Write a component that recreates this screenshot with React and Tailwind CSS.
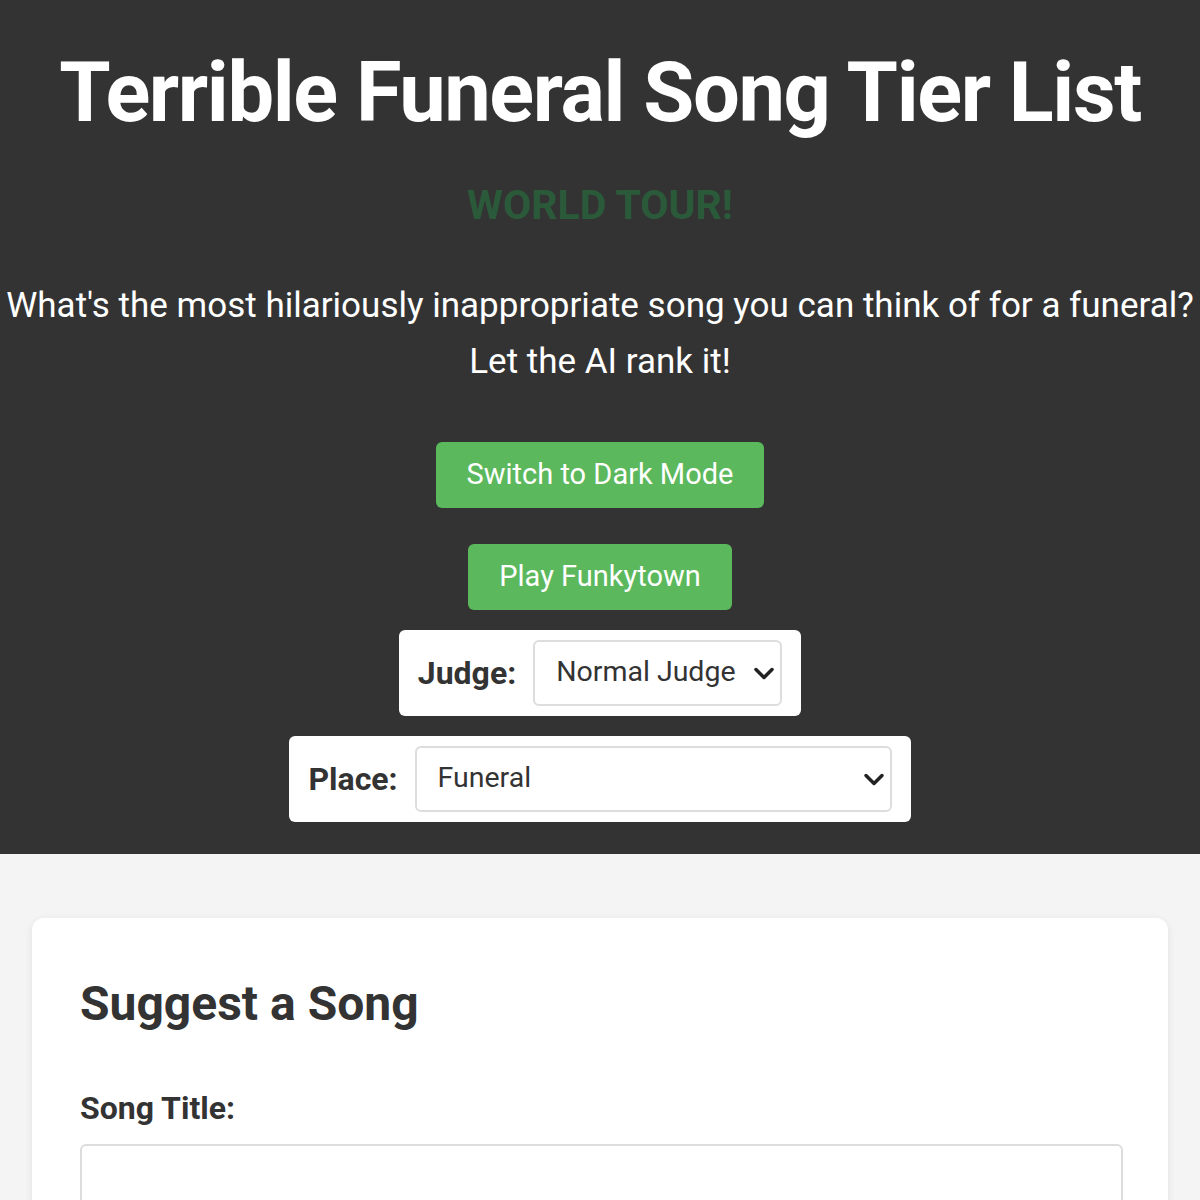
import React, { useState } from 'react';

const Chevron = () => (
  <svg width="24" height="24" viewBox="0 0 24 24" fill="none" stroke="#222" strokeWidth="3.5" strokeLinecap="round" strokeLinejoin="round">
    <path d="M4 8.5l8 8 8-8" />
  </svg>
);

const SelectBox = ({ label, value, options, onChange, width }) => (
  <div className="flex items-center gap-[17px] bg-white rounded-md px-[19px] py-[10px]">
    <label className="text-[32px] font-bold text-[#333]">{label}</label>
    <div className={`relative ${width}`}>
      <select
        value={value}
        onChange={(e) => onChange(e.target.value)}
        className="w-full h-[66px] appearance-none border-2 border-[#ddd] rounded-md bg-white pl-[21px] pr-[36px] text-[28.5px] text-[#333]"
      >
        {options.map((o) => (
          <option key={o}>{o}</option>
        ))}
      </select>
      <span className="absolute right-[6px] top-1/2 -translate-y-1/2 pointer-events-none flex">
        <Chevron />
      </span>
    </div>
  </div>
);

export default function App() {
  const [judge, setJudge] = useState('Normal Judge');
  const [place, setPlace] = useState('Funeral');
  const [title, setTitle] = useState('');

  return (
    <div className="min-h-screen bg-[#f4f4f4] font-['Roboto',sans-serif] text-[#333]">
      <header className="bg-[#333] text-white flex flex-col items-center pt-[43px] pb-[32px]">
        <h1 className="text-[83px] font-bold leading-[1.2] tracking-[-1.4px]">Terrible Funeral Song Tier List</h1>
        <div className="mt-[42px] text-[41px] font-bold text-[#2a5a3a] leading-none">WORLD TOUR!</div>
        <p className="mt-[52px] text-[35px] leading-[56px] text-center whitespace-nowrap">
          What's the most hilariously inappropriate song you can think of for a funeral?
          <br />
          Let the AI rank it!
        </p>
        <button className="mt-[52px] w-[328px] h-[66px] bg-[#5cb85c] rounded-md text-[29px] text-white">
          Switch to Dark Mode
        </button>
        <button className="mt-[36px] w-[264px] h-[66px] bg-[#5cb85c] rounded-md text-[29px] text-white">
          Play Funkytown
        </button>
        <div className="mt-[20px]">
          <SelectBox label="Judge:" value={judge} onChange={setJudge} width="w-[249px]" options={['Normal Judge', 'Harsh Judge', 'Nice Judge']} />
        </div>
        <div className="mt-[20px]">
          <SelectBox label="Place:" value={place} onChange={setPlace} width="w-[477px]" options={['Funeral', 'Wedding', 'Birthday']} />
        </div>
      </header>

      <main className="px-[32px] pt-[64px]">
        <section className="bg-white rounded-xl shadow-[0_2px_8px_rgba(0,0,0,0.08)] pl-[48px] pr-[45px] pt-[56px] pb-[40px]">
          <h2 className="text-[48px] font-bold leading-tight">Suggest a Song</h2>
          <label className="block mt-[50px] text-[32px] font-bold">Song Title:</label>
          <input
            value={title}
            onChange={(e) => setTitle(e.target.value)}
            className="mt-[12px] w-full h-[66px] border-2 border-[#ddd] rounded-md px-[20px] text-[28px]"
          />
        </section>
      </main>
    </div>
  );
}
